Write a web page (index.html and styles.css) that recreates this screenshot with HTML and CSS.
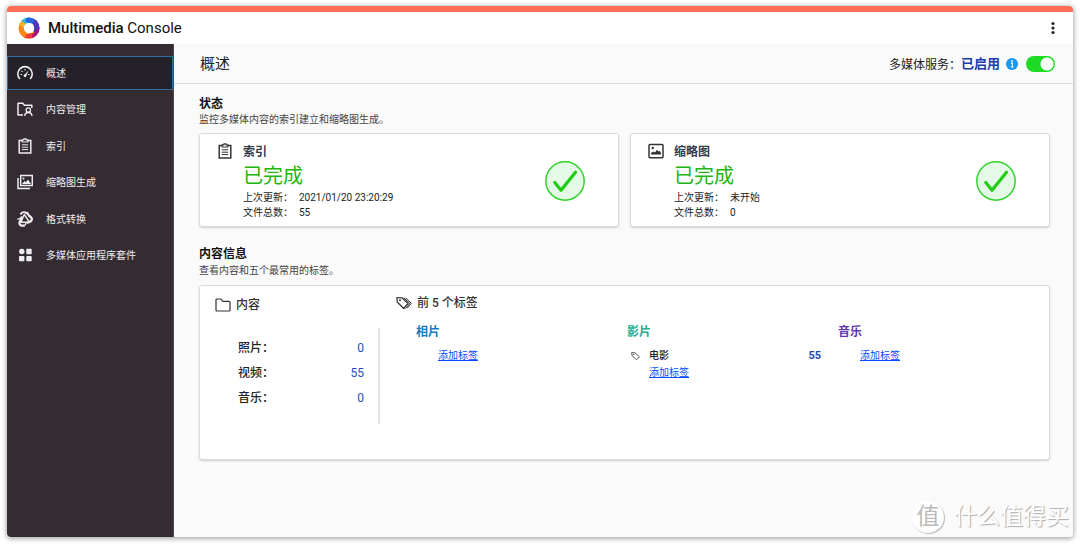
FILE: index.html
```html
<!DOCTYPE html>
<html lang="zh-CN">
<head>
<meta charset="utf-8">
<title>Multimedia Console</title>
<link rel="stylesheet" href="styles.css">
</head>
<body>
<svg class="defs" width="0" height="0" aria-hidden="true">
  <symbol id="clipboard" viewBox="0 0 16 16"><path d="M5 2.500H2.200v12.600h11.600V2.500H11" fill="none" stroke="currentColor" stroke-width="1.500"/><path d="M5.200 4V1.900h1.600L7 .8h2l.2 1.100h1.600V4z" fill="none" stroke="currentColor" stroke-width="1.200"/><path d="M4.800 6.800h6.400M4.800 9.200h6.400M4.800 11.600h6.400" stroke="currentColor" stroke-width="1"/></symbol>
  <symbol id="tag" viewBox="0 0 16 16"><path d="M1 2.500 6.500 3l7 6.200-4.600 4.800L1.700 7.500z" fill="none" stroke="currentColor" stroke-width="1.200" stroke-linejoin="round"/><circle cx="4.300" cy="5.500" r=".9" fill="currentColor"/></symbol>
</svg>
<div class="window">
  <header class="topbar">
    <svg class="logo" viewBox="0 0 22 22" aria-hidden="true">
      <defs><clipPath id="disc"><circle cx="11" cy="11" r="10.500"/></clipPath></defs>
      <g clip-path="url(#disc)">
        <path d="M0 0h22v22H0z" fill="#ffb51f"/>
        <path d="M2 3 11-1l5 7-8 1z" fill="#35b0ee"/>
        <path d="M8-1h12l-1 13-4-5-7-2z" fill="#2463e4"/>
        <path d="m16 3 8 2v10l-8 1-1-9z" fill="#4a35bd"/>
        <path d="m22 10v10l-9 3-2-6 5-1z" fill="#a80f78"/>
        <path d="M14 22H4l-1-8 6 3 6-1z" fill="#f03a3b"/>
        <path d="M6 21-1 15 2 8l4 3 3 6z" fill="#ff8419"/>
      </g>
      <circle cx="11" cy="11" r="5.200" fill="#fff"/>
    </svg>
    <div class="brand"><b>Multimedia</b> Console</div>
    <button class="more" type="button" aria-label="更多"><svg width="6" height="14" viewBox="0 0 6 14"><g fill="#222"><circle cx="3" cy="2.500" r="1.600"/><circle cx="3" cy="7" r="1.600"/><circle cx="3" cy="11.500" r="1.600"/></g></svg></button>
  </header>
  <div class="body">
    <nav class="sidebar">
      <a class="item active" href="#overview"><svg class="icon" viewBox="0 0 16 16"><path d="M2.500 13.500A7.200 7.200 0 1 1 13.500 13.500" fill="none" stroke="currentColor" stroke-width="1.600" stroke-linecap="round"/><path d="M7 10.300 11.600 5.500 9 11.300z" fill="currentColor"/><circle cx="8" cy="10.800" r="1.400" fill="currentColor"/><path d="M8 4v1.500M4.500 5.800l1 1M3.500 9.500H5M11 9.500h1.500" stroke="currentColor" stroke-width="1.100"/></svg>概述</a>
      <a class="item" href="#content"><svg class="icon" viewBox="0 0 16 16"><path d="M6 14H1V2.200h4.700l1.800 2h7.300V7" fill="none" stroke="currentColor" stroke-width="1.500" stroke-linejoin="round"/><circle cx="11.300" cy="9" r="2.200" fill="none" stroke="currentColor" stroke-width="1.300"/><path d="M7.700 15c.2-2.500 1.500-3.500 3.600-3.500S14.800 12.500 15 15" fill="none" stroke="currentColor" stroke-width="1.300"/></svg>内容管理</a>
      <a class="item" href="#index"><svg class="icon"><use href="#clipboard"/></svg>索引</a>
      <a class="item" href="#thumbs"><svg class="icon" viewBox="0 0 16 16"><path d="M3.700 1.500h11.600v10H3.700zM1 4v10.500h12" fill="none" stroke="currentColor" stroke-width="1.500"/><path d="m5 10 2.500-3 1.500 1.200L11 5.500l3 4.500z" fill="currentColor"/><circle cx="6.500" cy="4.500" r="1" fill="currentColor"/></svg>缩略图生成</a>
      <a class="item" href="#transcode"><svg class="icon" viewBox="0 0 16 16"><path d="M7.200 3.500 4 11.200h8.500z" fill="none" stroke="currentColor" stroke-width="1.400" stroke-linejoin="round"/><path d="M3.500 3.500Q5 .2 8.500 1.500q2.500 1 4.500 4.500" fill="none" stroke="currentColor" stroke-width="1.900"/><path d="M12 4.500q3 2 2.800 4-.5 2.500-5 3.300" fill="none" stroke="currentColor" stroke-width="2.200"/><path d="M7.800 14.300Q2 15.500 2.500 11.500L5 5.500" fill="none" stroke="currentColor" stroke-width="2.200"/><path d="M.3 8.300 4 7M10.500.8l.5 3M14.800 8.500l1.200-1M8 14.500l1-2.500" stroke="currentColor" stroke-width="1.300"/></svg>格式转换</a>
      <a class="item" href="#suite"><svg class="icon" viewBox="0 0 16 16"><g fill="currentColor"><circle cx="4.800" cy="4.500" r="2.700"/><rect x="9.300" y="1.800" width="5.400" height="5.400" rx=".8"/><rect x="2" y="9.100" width="5.400" height="5.200" rx=".8"/><rect x="9.300" y="9.100" width="5.400" height="5.200" rx=".8"/></g></svg>多媒体应用程序套件</a>
    </nav>
    <main class="main">
      <div class="pagehead">
        <h1>概述</h1>
        <label class="service" for="service">多媒体服务：</label>
        <strong class="enabled">已启用</strong>
        <svg class="info" viewBox="0 0 12 12" aria-hidden="true"><circle cx="6" cy="6" r="6" fill="#1296f8"/><path d="M4.900 5.200h1.500v3.700M4.800 9h2.800" fill="none" stroke="#fff" stroke-width="1.200"/><circle cx="6" cy="3" r=".9" fill="#fff"/></svg>
        <input class="switch" id="service" type="checkbox" role="switch" checked>
      </div>
      <section class="section">
        <h2>状态</h2>
        <p class="desc">监控多媒体内容的索引建立和缩略图生成。</p>
        <div class="cards">
          <article class="card status">
            <svg class="icon"><use href="#clipboard"/></svg>
            <div>
              <h3>索引</h3>
              <p class="done">已完成</p>
              <dl class="facts"><dt>上次更新：</dt><dd>2021/01/20 23:20:29</dd><dt>文件总数：</dt><dd>55</dd></dl>
            </div>
            <svg class="check" viewBox="0 0 40 40"><circle cx="20" cy="20" r="19.200" fill="#e4f9e6" stroke="#2fd32a" stroke-width="1.500"/><path d="m9.800 21.500 6.200 7.700 14.500-18" fill="none" stroke="#1fce12" stroke-width="3.200" stroke-linecap="round" stroke-linejoin="round"/></svg>
          </article>
          <article class="card status">
            <svg class="icon" viewBox="0 0 16 16"><rect x="1" y="1.400" width="14" height="13.400" rx="1" fill="none" stroke="currentColor" stroke-width="1.500"/><path d="M3 11.500V10l2.500-1.500L7 9.500l2-2.800 1.500 1.800 1-.7L13 10v1.500z" fill="currentColor"/><circle cx="4.800" cy="5" r="1.200" fill="currentColor"/></svg>
            <div>
              <h3>缩略图</h3>
              <p class="done">已完成</p>
              <dl class="facts"><dt>上次更新：</dt><dd>未开始</dd><dt>文件总数：</dt><dd>0</dd></dl>
            </div>
            <svg class="check" viewBox="0 0 40 40"><circle cx="20" cy="20" r="19.200" fill="#e4f9e6" stroke="#2fd32a" stroke-width="1.500"/><path d="m9.800 21.500 6.200 7.700 14.500-18" fill="none" stroke="#1fce12" stroke-width="3.200" stroke-linecap="round" stroke-linejoin="round"/></svg>
          </article>
        </div>
      </section>
      <section class="section">
        <h2>内容信息</h2>
        <p class="desc">查看内容和五个最常用的标签。</p>
        <div class="card summary">
          <div class="content-col">
            <h3><svg class="icon" viewBox="0 0 16 16"><path d="M1 13V3q0-1 1-1h4l1.700 2.300H14q1 0 1 1V13q0 1-1 1H2q-1 0-1-1z" fill="none" stroke="currentColor" stroke-width="1.200"/></svg>内容</h3>
            <dl class="counts"><dt>照片：</dt><dd>0</dd><dt>视频：</dt><dd>55</dd><dt>音乐：</dt><dd>0</dd></dl>
          </div>
          <div class="tags-col">
            <h3><svg class="icon" viewBox="0 0 16 16"><path d="M.9 2.500 6 2.800l6 5.700-4.300 5L1.200 7z" fill="none" stroke="currentColor" stroke-width="1.200" stroke-linejoin="round"/><path d="m7.800 2.700 6 5.800-4.300 5M9.700 2.900l5.700 5.500-4.200 4.800" fill="none" stroke="currentColor" stroke-width="1"/><circle cx="4" cy="5.300" r="1" fill="currentColor"/></svg>前 5 个标签</h3>
            <div class="groups">
              <div class="group"><h4 class="photo">相片</h4><a class="add" href="#photo">添加标签</a></div>
              <div class="group"><h4 class="video">影片</h4>
                <div class="tagrow"><svg class="small" viewBox="0 0 16 16"><use href="#tag"/></svg><span>电影</span><b>55</b></div>
                <a class="add" href="#video">添加标签</a></div>
              <div class="group"><h4 class="music">音乐</h4><a class="add" href="#music">添加标签</a></div>
            </div>
          </div>
        </div>
      </section>
    </main>
  </div>
  <div class="watermark"><span class="mark">值</span><span>什么值得买</span></div>
</div>
</body>
</html>
```

FILE: styles.css
```css
* { box-sizing: border-box; }
body {
  margin: 0;
  min-height: 100vh;
  display: flex;
  padding: 6px 7px 7px;
  background: #fff;
  color: #222;
  font: 10px/15px Roboto, "Noto Sans CJK SC", sans-serif;
}
h1, h2, h3, h4, p, dl, dd { margin: 0; }
svg { display: block; flex: none; }
.defs { position: absolute; }
.window {
  position: relative;
  flex: 1;
  display: flex;
  flex-direction: column;
  overflow: hidden;
  border-top: 6px solid #ff6d56;
  border-radius: 4px;
  background: #fafafa;
}
body::before {
  content: "";
  position: absolute;
  inset: 6px 7px 7px;
  border-radius: 4px;
  box-shadow: 0 1px 5px 1px #00000055;
}
.topbar {
  display: flex;
  align-items: center;
  height: 32px;
  padding: 0 13px 0 11px;
  background: #fff;
}
.logo { width: 22px; height: 22px; margin-right: 8px; }
.brand { font-size: 15px; line-height: 20px; color: #111; }
.brand b { font-weight: 500; }
.more {
  display: grid;
  place-items: center;
  width: 14px;
  height: 20px;
  margin-left: auto;
  padding: 0;
  border: 0;
  background: none;
}
.body { flex: 1; display: flex; }
.sidebar {
  width: 167px;
  flex: none;
  padding-top: 12px;
  background: #352b32;
  border-right: 1px solid #51484e;
}
.item {
  display: flex;
  align-items: center;
  gap: 13px;
  height: 34px;
  margin-bottom: 2px;
  padding-left: 10px;
  color: #eee;
  text-decoration: none;
}
.item:nth-child(even) { margin-bottom: 3px; }
.active { outline: 1px solid #326da1; outline-offset: -1px; background: #252128; }
.icon { width: 16px; height: 16px; }
.main { flex: 1; min-width: 0; }
.pagehead {
  display: flex;
  align-items: center;
  height: 40px;
  padding: 0 18px 0 26px;
  border-bottom: 1px solid #dedede;
}
h1 { margin-right: auto; font-size: 15px; font-weight: 400; line-height: 20px; }
.service { font-size: 12px; line-height: 18px; padding-top: 2px; }
.enabled { margin-right: 6px; color: #1a3dab; font-size: 13px; font-weight: 700; }
.info { width: 12px; height: 12px; margin-right: 8px; }
.switch {
  appearance: none;
  width: 29px;
  height: 16px;
  margin: 0;
  border-radius: 8px;
  background: radial-gradient(circle at 21px 8px, #fff 6px, #1eda24 7px);
}
.section { padding: 13px 23px 0 25px; }
.section + .section { padding-top: 20px; }
h2 { font-size: 12px; font-weight: 700; line-height: 15px; color: #111; }
.desc { margin-bottom: 6px; color: #444; }
.section + .section .desc { line-height: 17px; }
.cards { display: grid; grid-template-columns: 1fr 1fr; gap: 11px; }
.card {
  border: 1px solid #dcdcdc;
  border-radius: 3px;
  background: #fff;
  box-shadow: 0 1px 2px #0000002b;
}
.status { display: flex; gap: 10px; padding: 8px 33px 6px 17px; }
.status .icon { margin-top: 1px; color: #333; }
.status h3 { line-height: 20px; color: #343b4a; font-weight: 700; }
h3 { font-size: 12px; font-weight: 500; color: #333; }
.done { color: #20b60d; font-size: 20px; line-height: 28px; }
.facts { display: grid; grid-template-columns: 56px 1fr; }
.check { width: 40px; height: 40px; margin-left: auto; align-self: center; }
.summary { display: flex; min-height: 175px; padding-top: 7px; }
.summary h3 { display: flex; align-items: center; gap: 5px; line-height: 20px; }
.content-col { width: 180px; flex: none; padding: 2px 0 0 15px; }
.counts {
  display: grid;
  grid-template-columns: 1fr auto;
  align-content: start;
  height: 96px;
  margin-top: 13px;
  padding: 8px 14px 0 23px;
  border-right: 2px solid #e2e2e2;
  font-size: 12px;
  line-height: 25px;
  font-weight: 500;
}
.counts dd { color: #1f4fc4; font-weight: 400; text-align: right; }
.tags-col { flex: 1; padding-left: 16px; }
.groups { display: grid; grid-template-columns: repeat(3, 1fr); margin-top: 10px; padding-left: 20px; }
h4 { margin-bottom: 6px; font-size: 12px; font-weight: 700; line-height: 18px; }
.photo { color: #147cc4; }
.video { color: #24ae91; }
.music { color: #6236ac; }
.add { display: block; width: max-content; margin-left: 22px; color: #064bff; line-height: 17px; }
.tagrow { display: flex; align-items: center; gap: 8px; padding: 0 17px 0 4px; font-weight: 500; line-height: 17px; }
.tagrow b { margin-left: auto; color: #1b48b4; font-size: 11px; font-weight: 700; }
.small { width: 10px; height: 10px; }
.watermark {
  position: absolute;
  right: 4px;
  bottom: 4px;
  display: flex;
  align-items: center;
  gap: 10px;
  color: #fff;
  font-size: 23px;
  line-height: 32px;
  text-shadow: 1px 1px 1px #aaa;
}
.mark {
  width: 32px;
  height: 32px;
  border-radius: 50%;
  background: #fff;
  box-shadow: 1px 1px 1px #bbb;
  color: #bbb;
  text-align: center;
  text-shadow: none;
}
```
